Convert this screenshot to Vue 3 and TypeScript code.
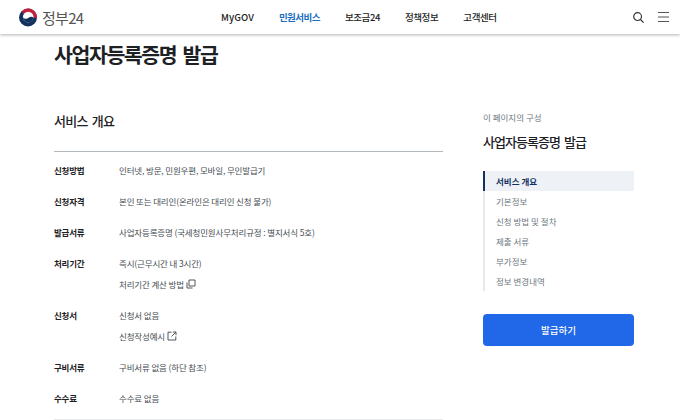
<script setup lang="ts">
interface Row { label: string; lines: { text: string; icon?: string }[] }
const nav: string[] = ['MyGOV', '민원서비스', '보조금24', '정책정보', '고객센터']
const rows: Row[] = [
  { label: '신청방법', lines: [{ text: '인터넷, 방문, 민원우편, 모바일, 무인발급기' }] },
  { label: '신청자격', lines: [{ text: '본인 또는 대리인(온라인은 대리인 신청 불가)' }] },
  { label: '발급서류', lines: [{ text: '사업자등록증명 (국세청민원사무처리규정 : 별지서식 5호)' }] },
  { label: '처리기간', lines: [{ text: '즉시(근무시간 내 3시간)' }, { text: '처리기간 계산 방법', icon: 'copy' }] },
  { label: '신청서', lines: [{ text: '신청서 없음' }, { text: '신청작성예시', icon: 'ext' }] },
  { label: '구비서류', lines: [{ text: '구비서류 없음 (하단 참조)' }] },
  { label: '수수료', lines: [{ text: '수수료 없음' }] },
]
const toc: string[] = ['서비스 개요', '기본정보', '신청 방법 및 절차', '제출 서류', '부가정보', '정보 변경내역']
</script>

<template>
  <div class="page">
    <header class="top">
      <div class="logo">
        <svg width="18" height="19" viewBox="0 0 18 18">
          <circle cx="9" cy="9" r="9" fill="#13315f" />
          <path d="M6 0.5A9 9 0 0 1 18 9.4L14.2 9.2C14 6 11.5 3.6 8.5 3.8C7 3.9 5.6 4.5 4.6 5.6L3 3.2C3.8 2 4.8 1 6 0.5Z" fill="#c5203c" />
          <circle cx="9.2" cy="8.6" r="5.3" fill="#fff" />
          <path d="M3.9 8.8C5.5 10.8 8 10.6 9.6 9.2C11.2 7.8 13 7.9 14.5 8.9C14.3 11.8 12 14 9.2 13.9C6.3 13.9 4.1 11.6 3.9 8.8Z" fill="#13315f" />
        </svg>
        <span class="logo-text">정부24</span>
      </div>
      <nav class="nav">
        <span v-for="(n, i) in nav" :key="n" class="nav-item" :class="{ active: i === 1, latin: i === 0 }">{{ n }}</span>
      </nav>
      <div class="tools">
        <svg width="11" height="11" viewBox="0 0 11 11" fill="none" stroke="#333" stroke-width="1.2">
          <circle cx="4.6" cy="4.6" r="3.9" />
          <path d="M7.5 7.5L10.6 10.6" />
        </svg>
        <svg width="11" height="10" viewBox="0 0 11 10" fill="none" stroke="#555" stroke-width="1">
          <path d="M0 0.5H11M0 5H11M0 9.5H11" />
        </svg>
      </div>
    </header>

    <div class="content">
      <main class="main">
        <h1 class="title">사업자등록증명 발급</h1>
        <h2 class="sub">서비스 개요</h2>
        <div class="table">
          <div v-for="r in rows" :key="r.label" class="row">
            <div class="label">{{ r.label }}</div>
            <div class="vals">
              <div v-for="l in r.lines" :key="l.text" class="val">
                {{ l.text }}
                <svg v-if="l.icon === 'copy'" class="ico" width="10" height="10" viewBox="0 0 10 10" fill="none" stroke="#444" stroke-width="0.9">
                  <path d="M3 1H9V7H3ZM1 3.5V9H6.5" />
                </svg>
                <svg v-if="l.icon === 'ext'" class="ico" width="10" height="10" viewBox="0 0 10 10" fill="none" stroke="#444" stroke-width="0.9">
                  <path d="M4.5 1.2H1V9H8.8V5.5M5.8 1H9V4.2M9 1L4.5 5.5" />
                </svg>
              </div>
            </div>
          </div>
        </div>
      </main>
      <aside class="side">
        <div class="eyebrow">이 페이지의 구성</div>
        <div class="side-title">사업자등록증명 발급</div>
        <ul class="toc">
          <li v-for="(t, i) in toc" :key="t" :class="{ on: i === 0 }">{{ t }}</li>
        </ul>
        <button class="cta">발급하기</button>
      </aside>
    </div>
  </div>
</template>

<style>
html, body { margin: 0; background: #fff; overflow: hidden; }
</style>

<style scoped>
.page {
  width: 680px;
  height: 420px;
  overflow: hidden;
  font-family: "Noto Sans CJK KR", "Noto Sans", sans-serif;
  color: #1e2124;
}
.top {
  height: 34px;
  display: flex;
  align-items: center;
  background: #fff;
  box-shadow: 0 1px 3px rgba(0, 0, 0, 0.3);
  position: relative;
  padding: 0 11px 0 19px;
}
.logo { display: flex; align-items: center; gap: 5px; width: 202px; }
.logo-text { font-size: 15px; color: #555; letter-spacing: -0.7px; }
.nav { display: flex; gap: 25px; flex: 1; }
.nav-item { font-size: 9.5px; font-weight: 500; color: #222; letter-spacing: -0.4px; }
.nav-item.latin { letter-spacing: 0.1px; }
.nav-item.active { color: #1a6fc0; font-weight: 700; letter-spacing: -0.55px; }
.tools { display: flex; align-items: center; gap: 14px; }
.content { display: flex; padding: 0 0 0 54px; }
.main { width: 389px; }
.title {
  margin: 6px 0 0;
  font-size: 20.5px;
  line-height: 28px;
  font-weight: 700;
  letter-spacing: -1.4px;
  word-spacing: 3px;
}
.sub {
  margin: 44px 0 0;
  font-size: 13px;
  line-height: 18px;
  font-weight: 500;
  letter-spacing: -0.75px;
  word-spacing: 2px;
  padding-bottom: 21px;
  border-bottom: 1px solid #b1b8be;
}
.table { padding: 8px 0 0; height: 259px; border-bottom: 1px solid #e6e8ea; display: flex; flex-direction: column; gap: 11px; box-sizing: content-box; }
.row { display: flex; }
.label { width: 65px; font-size: 8.5px; line-height: 20px; font-weight: 700; flex: none; letter-spacing: -0.2px; }
.vals { display: flex; flex-direction: column; gap: 1px; }
.val { font-size: 8.5px; line-height: 20px; color: #464c53; display: flex; align-items: center; gap: 2px; letter-spacing: -0.15px; }
.ico { flex: none; }
.side { width: 151px; margin-left: 40px; padding-top: 77px; }
.eyebrow { font-size: 8.5px; line-height: 12px; color: #6d7882; }
.side-title { margin-top: 10px; font-size: 13px; line-height: 18px; font-weight: 500; letter-spacing: -0.95px; word-spacing: 2px; }
.toc { list-style: none; margin: 20px 0 0; padding: 0; border-left: 2px solid #e6e8ea; }
.toc li { height: 20px; line-height: 20px; font-size: 8.5px; color: #6d7882; padding-left: 11px; margin-left: -2px; border-left: 2px solid transparent; }
.toc li.on { background: #eef2f7; border-left-color: #13315f; color: #13315f; font-weight: 700; }
.cta {
  display: block;
  width: 100%;
  height: 32px;
  margin-top: 23px;
  border: 0;
  border-radius: 4px;
  background: #2168e8;
  color: #fff;
  font: 500 9.5px "Noto Sans CJK KR", sans-serif;
}
</style>
